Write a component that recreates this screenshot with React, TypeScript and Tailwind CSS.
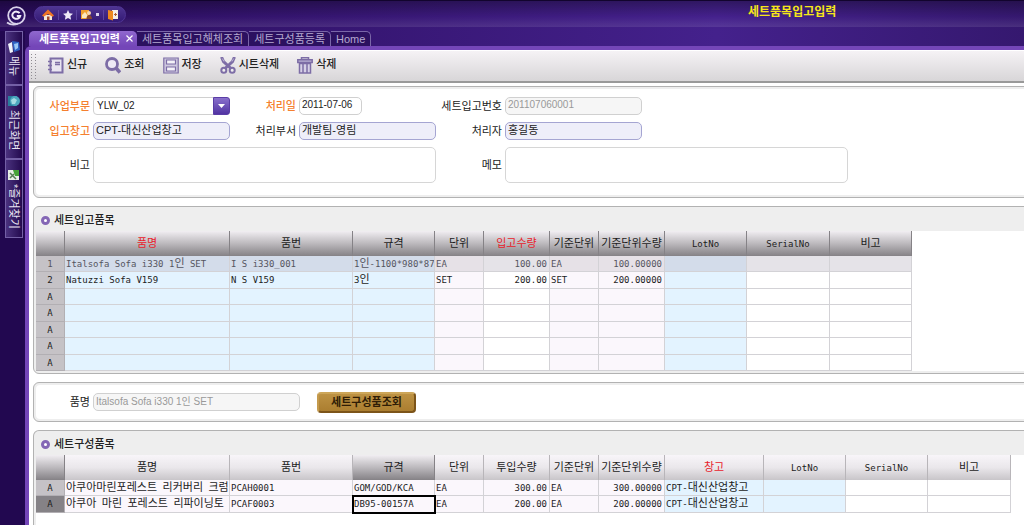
import type { ReactNode } from "react";
import clsx from "clsx";

type Tone = "blue" | "pink" | "white";

interface Column {
  title: string;
  width: string;
  tone: Tone;
  required?: boolean;
  numeric?: boolean;
  active?: boolean;
}

interface Row {
  mark: string;
  cells: string[];
  selected?: boolean;
}

const receiptColumns: Column[] = [
  { title: "품명", width: "w-[165px]", tone: "blue", required: true },
  { title: "품번", width: "w-[123px]", tone: "blue" },
  { title: "규격", width: "w-[82px]", tone: "blue" },
  { title: "단위", width: "w-[49px]", tone: "pink" },
  { title: "입고수량", width: "w-[66px]", tone: "white", required: true, numeric: true },
  { title: "기준단위", width: "w-[49px]", tone: "pink" },
  { title: "기준단위수량", width: "w-[66px]", tone: "pink", numeric: true },
  { title: "LotNo", width: "w-[82px]", tone: "blue" },
  { title: "SerialNo", width: "w-[83px]", tone: "white" },
  { title: "비고", width: "w-[82px]", tone: "white" },
];

const receiptRows: Row[] = [
  {
    mark: "1",
    selected: true,
    cells: ["Italsofa Sofa i330 1인 SET", "I S i330_001", "1인-1100*980*87", "EA", "100.00", "EA", "100.00000", "", "", ""],
  },
  {
    mark: "2",
    cells: ["Natuzzi Sofa V159", "N S V159", "3인", "SET", "200.00", "SET", "200.00000", "", "", ""],
  },
  { mark: "A", cells: [] },
  { mark: "A", cells: [] },
  { mark: "A", cells: [] },
  { mark: "A", cells: [] },
  { mark: "A", cells: [] },
];

const partColumns: Column[] = [
  { title: "품명", width: "w-[165px]", tone: "pink" },
  { title: "품번", width: "w-[123px]", tone: "pink" },
  { title: "규격", width: "w-[82px]", tone: "pink", active: true },
  { title: "단위", width: "w-[49px]", tone: "pink" },
  { title: "투입수량", width: "w-[66px]", tone: "pink", numeric: true },
  { title: "기준단위", width: "w-[49px]", tone: "pink" },
  { title: "기준단위수량", width: "w-[66px]", tone: "pink", numeric: true },
  { title: "창고", width: "w-[99px]", tone: "blue", required: true },
  { title: "LotNo", width: "w-[82px]", tone: "blue" },
  { title: "SerialNo", width: "w-[82px]", tone: "white" },
  { title: "비고", width: "w-[83px]", tone: "white" },
];

const partRows: Row[] = [
  {
    mark: "A",
    cells: ["아쿠아마린포레스트 리커버리 크럼", "PCAH0001", "GOM/GOD/KCA", "EA", "300.00", "EA", "300.00000", "CPT-대신산업창고", "", "", ""],
  },
  {
    mark: "A",
    cells: ["아쿠아 마린 포레스트 리파이닝토", "PCAF0003", "DB95-00157A", "EA", "200.00", "EA", "200.00000", "CPT-대신산업창고", "", "", ""],
  },
];

const toneClass: Record<Tone, string> = {
  blue: "bg-[#e3f3ff]",
  pink: "bg-[#fbf7fc]",
  white: "bg-white",
};

const selectedToneClass: Record<Tone, string> = {
  blue: "bg-[#d3dcea]",
  pink: "bg-[#e6e1e7]",
  white: "bg-[#e5e3e8]",
};

// Latin is set in a small monospace, Hangul one step larger
function GridText({ children }: { children: string }) {
  return (
    <>
      {children.split(/([가-힣]+)/).map((part, i) =>
        /[가-힣]/.test(part) ? (
          <span key={i} className="text-[11px]">{part}</span>
        ) : (
          part
        )
      )}
    </>
  );
}

interface GridProps {
  label: string;
  columns: Column[];
  rows: Row[];
  dark?: boolean;
  focus?: { row: number; col: number };
}

function Grid({ label, columns, rows, dark, focus }: GridProps) {
  const darkHead = "bg-linear-to-b from-[#f1eef2] via-[#bcb9bd] to-[#858286] border-[#858286]";
  const lightHead = "bg-linear-to-b from-[#f8f5f9] via-[#eae7eb] to-[#c8c5c9] border-[#b8b5b9]";

  return (
    <table
      aria-label={label}
      className="w-0 table-fixed border-separate border-spacing-0 whitespace-pre font-['DejaVu_Sans_Mono','Noto_Sans_CJK_KR',monospace] text-[9px] leading-[14px] text-[#1c1c1c]"
    >
      <thead>
        <tr className="h-[25px]">
          <th aria-label="No" className={clsx("w-[29px] border-r p-0", darkHead)} />
          {columns.map((col) => (
            <th
              key={col.title}
              scope="col"
              className={clsx(
                "border-r p-0 font-normal",
                col.width,
                dark || col.active ? darkHead : lightHead,
                col.required && "text-[#e8212b]"
              )}
            >
              <GridText>{col.title}</GridText>
            </th>
          ))}
        </tr>
      </thead>
      <tbody>
        {rows.map((row, r) => (
          <tr key={r} className={clsx("h-[16px] even:h-[17px]", row.selected && "text-[#55555f]")}>
            <th
              scope="row"
              className={clsx(
                "border-r border-b border-[#b2afb3] p-0 font-normal",
                focus?.row === r ? "bg-[#858286]" : "bg-[#c5c2c6]"
              )}
            >
              {row.mark}
            </th>
            {columns.map((col, c) => (
              <td
                key={col.title}
                className={clsx(
                  "overflow-hidden border-r border-b border-[#d3d2d6] py-0",
                  row.selected ? selectedToneClass[col.tone] : toneClass[col.tone],
                  col.numeric ? "pr-[2px] pl-0 text-right" : "pr-0 pl-px",
                  focus?.row === r && focus.col === c && "outline-2 -outline-offset-1 outline-black"
                )}
              >
                <GridText>{row.cells[c] ?? ""}</GridText>
              </td>
            ))}
          </tr>
        ))}
      </tbody>
    </table>
  );
}

function Panel({ className, children }: { className?: string; children: ReactNode }) {
  return (
    <section className={clsx("-mr-2 rounded-md border border-[#b2b2b2] bg-[#eeeeee] p-[2px]", className)}>
      {children}
    </section>
  );
}

function PanelTitle({ children }: { children: ReactNode }) {
  return (
    <h2 className="flex h-[22px] items-center gap-1 pl-[5px] text-[11px] leading-4 font-medium text-[#222]">
      <span className="size-[9px] rounded-full border-[3px] border-[#8467b5] bg-white" />
      {children}
    </h2>
  );
}

function Label({ htmlFor, required, children }: { htmlFor: string; required?: boolean; children: ReactNode }) {
  return (
    <label
      htmlFor={htmlFor}
      className={clsx("self-center pr-[3px] text-right leading-4", required ? "font-medium text-[#f5802f]" : "text-[#222]")}
    >
      {children}
    </label>
  );
}

const fieldBase = "block h-[18px] w-full rounded-[5px] border px-[2px] pb-[4px] leading-3 outline-none";
const plainField = "border-[#d0d0d0] bg-white text-[10px] text-[#222]";
const lockedField = "border-[#d0d0d0] bg-[#f6f6f6] text-[10px] text-[#999]";
const codeField = "border-[#a5a5d2] bg-[#eeeef9] text-[11px] text-[#222]";

const iconProps = {
  width: 16,
  height: 17,
  viewBox: "0 0 16 17",
  fill: "none",
  stroke: "#7d6da6",
  strokeWidth: 2,
  "aria-hidden": true,
} as const;

const tools = [
  {
    name: "신규",
    icon: (
      <svg {...iconProps}>
        <path d="M2.5 1.5h12v14h-12z" fill="#e9e5f1" />
        <path d="M0 4.5h4M0 8.5h4M0 12.5h4" strokeWidth="1.5" />
        <path d="M7 5.5h5M7 7.5h5" strokeWidth="1.5" />
      </svg>
    ),
  },
  {
    name: "조회",
    icon: (
      <svg {...iconProps}>
        <circle cx="7" cy="7" r="5.5" fill="#eeeaf5" strokeWidth="2.8" />
        <path d="M11 11l4 4.5" strokeWidth="3.6" />
      </svg>
    ),
  },
  {
    name: "저장",
    icon: (
      <svg {...iconProps} strokeWidth="1.2">
        <path d="M.8 1h14.400v15H.8z" fill="#cfc9df" />
        <path d="M3.500 3h9v4h-9z" fill="#f4f2f8" />
        <path d="M3.500 10h9v4h-9z" fill="#f4f2f8" />
      </svg>
    ),
  },
  {
    name: "시트삭제",
    icon: (
      <svg {...iconProps}>
        <path d="M1.500 0L3.500 4.500 11 11.500M14.500 0L12.500 4.500 5 11.500" strokeWidth="3" />
        <circle cx="3.800" cy="13.200" r="2.500" fill="#eee" />
        <circle cx="12.200" cy="13.200" r="2.500" fill="#eee" />
        <path d="M2.300 1.500L4 4.500M13.700 1.500L12 4.500" stroke="#b9b0d3" strokeWidth="1" />
      </svg>
    ),
  },
  {
    name: "삭제",
    icon: (
      <svg {...iconProps} strokeWidth="1.5">
        <path d="M4.500 2.500V.8h7v1.700" />
        <path d="M.8 2.800h14.400v2.600H.8z" fill="#b9b0d3" />
        <path d="M2.500 6.500h11V16h-11z" fill="#d6d0e6" />
        <path d="M6 6.500V16M10 6.500V16" />
      </svg>
    ),
  },
];

const sideTabs = [
  {
    name: "메뉴",
    height: "h-[54px]",
    icon: (
      <svg width="12" height="12" viewBox="0 0 12 12" aria-hidden="true">
        <path d="M0 3l4-2 1 10-3 1z" fill="#f2f5fb" />
        <path d="M4 0l7 1 1 8-6 2z" fill="#2f63c4" />
        <path d="M6 3l4-1v5l-3 2z" fill="#9cc8f5" />
      </svg>
    ),
  },
  {
    name: "최근화면",
    height: "h-[74px]",
    icon: (
      <svg width="12" height="12" viewBox="0 0 12 12" aria-hidden="true">
        <path d="M0 1h9v10H0z" fill="#2a7d9c" />
        <circle cx="7" cy="6" r="5" fill="#4da8bf" />
        <path d="M3 5l3-2 3 2-2 4H4z" fill="#a5dbe3" />
      </svg>
    ),
  },
  {
    name: "*즐겨찾기",
    height: "h-[79px]",
    icon: (
      <svg width="12" height="12" viewBox="0 0 12 12" aria-hidden="true">
        <path d="M0 1h11v10H0z" fill="#e8efe6" />
        <path d="M5 1h6v6H7z" fill="#45a336" />
        <path d="M2 4l6 6M2 9l4-4" stroke="#567c55" strokeWidth="1.5" />
      </svg>
    ),
  },
];

const tabs = ["세트품목입고해체조회", "세트구성품등록", "Home"];

function TopBar() {
  return (
    <header className="flex h-[26px] bg-linear-to-b from-black/30 via-transparent via-60% to-white/10">
      <div className="flex w-[34px] items-center pt-1 pl-[6px]">
        <svg width="20" height="20" viewBox="0 0 20 20" fill="none" aria-label="G" role="img">
          <circle cx="10.500" cy="9.500" r="8.300" fill="#2c1064" stroke="#d9d2ea" strokeWidth="1.800" />
          <path d="M1 16.500q5 3.500 11 1.200" stroke="#d9d2ea" strokeWidth="1.800" />
          <path d="M13.600 7.200A4 3.600 0 1 0 14.200 10H10.800" stroke="#f0ecf8" strokeWidth="2" />
        </svg>
      </div>
      <nav className="mt-[5px] flex h-[17px] w-[92px] items-center justify-between rounded-full border border-[#4f3594] bg-linear-to-b from-[#4e3491] to-[#341975] px-[7px]">
        <button type="button" aria-label="홈">
          <svg width="12" height="12" viewBox="0 0 12 12" aria-hidden="true">
            <path d="M2 6h8v5H2z" fill="#f5e8d8" />
            <path d="M0 6.500L6 .5l6 6-1.500 1.200L6 5 1.500 7.700z" fill="#ee7424" />
            <path d="M5 7.500h2.500V11H5z" fill="#a4492b" />
          </svg>
        </button>
        <span className="h-[10px] w-px bg-[#5d45a0]" />
        <button type="button" aria-label="즐겨찾기">
          <svg width="10" height="10" viewBox="0 0 10 10" aria-hidden="true">
            <path d="M5 0l1.500 3.300 3.500.4-2.600 2.400.7 3.700L5 8 1.900 9.800l.7-3.700L0 3.700l3.500-.4z" fill="#efeaf8" />
          </svg>
        </button>
        <span className="h-[10px] w-px bg-[#5d45a0]" />
        <button type="button" aria-label="사용자" className="flex items-center gap-1">
          <svg width="11" height="11" viewBox="0 0 11 11" aria-hidden="true">
            <path d="M0 1h8v9H0z" fill="#f2a12e" />
            <path d="M1 6l3-3 3 4v2H1z" fill="#fbe9bf" />
            <circle cx="8" cy="4" r="2" fill="#f7d7b2" />
            <path d="M5.500 10q0-4 2.500-4t3 4z" fill="#8c4a2c" />
          </svg>
          <span className="size-[3px] bg-[#d9d2ea]" />
        </button>
        <span className="h-[10px] w-px bg-[#5d45a0]" />
        <button type="button" aria-label="종료">
          <svg width="10" height="12" viewBox="0 0 10 12" aria-hidden="true">
            <path d="M4 1h6v9H4z" fill="#f6efe6" />
            <path d="M0 1l5 1v9.500L0 10z" fill="#ef8a1f" />
            <path d="M6 5.500h3M7.500 4v3" stroke="#b06030" />
          </svg>
        </button>
      </nav>
      <h1 className="ml-[622px] pt-[3px] text-[12px] leading-4 font-bold whitespace-nowrap text-[#f6e619]">세트품목입고입력</h1>
    </header>
  );
}

export default function App() {
  return (
    <div className="flex min-h-screen flex-col overflow-hidden border-t border-[#12042e] bg-linear-to-r from-[#2a0c5c] via-[#44218c] via-70% to-[#35186f] font-['Liberation_Sans','Noto_Sans_CJK_KR',sans-serif] text-[11px]">
      <TopBar />

      <div className="flex grow pt-1">
        <aside className="w-[25px] shrink-0 bg-[#220850] pl-[5px]">
          {sideTabs.map((tab) => (
            <button
              key={tab.name}
              type="button"
              className={clsx(
                "flex w-[18px] flex-col items-center gap-[3px] border border-[#7460a6] bg-linear-to-r from-[#4b327f] to-[#24094f] pt-[9px] text-[#e9e4f4]",
                tab.height
              )}
            >
              {tab.icon}
              <span className="leading-4 [text-orientation:sideways] [writing-mode:vertical-rl]">{tab.name}</span>
            </button>
          ))}
        </aside>

        <div className="flex min-w-0 grow flex-col">
          <div role="tablist" className="flex h-[15px] items-stretch pl-1 whitespace-nowrap">
            <div className="flex w-[108px] items-center gap-[6px] rounded-t-[5px] bg-linear-to-b from-[#9068cf] to-[#7446b8] pl-[10px] font-bold text-white">
              <button type="button" role="tab" aria-selected="true" className="leading-[14px]">세트품목입고입력</button>
              <button type="button" aria-label="닫기">
                <svg width="7" height="7" viewBox="0 0 7 7" stroke="#fff" strokeWidth="1.200" aria-hidden="true">
                  <path d="M.5.500l6 6M6.500.500l-6 6" />
                </svg>
              </button>
            </div>
            {tabs.map((tab) => (
              <button
                key={tab}
                type="button"
                role="tab"
                aria-selected="false"
                className="rounded-tr-[5px] border-t border-r border-[#7a66a8] bg-[#2c1160] px-[5px] leading-[14px] text-[#b5a9d0]"
              >
                {tab}
              </button>
            ))}
          </div>

          <main className="flex grow flex-col rounded-tl-md border-t-4 border-l-4 border-[#7446b8] bg-white">
            <div role="toolbar" className="flex h-[33px] items-start border-t border-b-2 border-t-white border-b-[#999] bg-linear-to-b from-[#f5f2f5] to-[#d8d6d8] pt-[3px] pl-[2px]">
              <svg width="6" height="27" viewBox="0 0 6 27" fill="#8f8c92" className="mr-[11px]" aria-hidden="true">
                {[0, 3, 6, 9, 12, 15, 18, 21, 24].map((y) => (
                  <g key={y}>
                    <rect x="0" y={y} width="1" height="1" />
                    <rect x="4" y={y} width="1" height="1" />
                  </g>
                ))}
              </svg>
              <div className="flex gap-[18px] pt-[3px]">
                {tools.map((tool) => (
                  <button key={tool.name} type="button" className="flex items-start gap-[3px] font-medium text-[#222]">
                    {tool.icon}
                    <span className="leading-[14px]">{tool.name}</span>
                  </button>
                ))}
              </div>
            </div>

            <div className="flex grow flex-col gap-2 overflow-hidden pt-[3px] pl-1">
              <Panel>
                <form
                  onSubmit={(e) => e.preventDefault()}
                  className="grid grid-cols-[57px_137px_69px_137px_69px_343px] gap-y-[7px] rounded-sm bg-white pt-2 pb-3"
                >
                  <Label htmlFor="unit" required>사업부문</Label>
                  <div className="relative">
                    <select
                      id="unit"
                      className="block h-[18px] w-full appearance-none rounded-sm border border-[#d0d0d0] bg-white pl-[3px] text-[10px] leading-4 text-[#222] outline-none"
                    >
                      <option>YLW_02</option>
                    </select>
                    <span className="pointer-events-none absolute top-0 right-0 flex h-[18px] w-[17px] items-center justify-center rounded-r-[3px] border border-[#5a3da6] bg-linear-to-b from-[#8a70cc] to-[#5233a2]">
                      <svg width="7" height="4" viewBox="0 0 7 4" aria-hidden="true">
                        <path d="M0 0h7L3.500 4z" fill="#fff" />
                      </svg>
                    </span>
                  </div>
                  <Label htmlFor="date" required>처리일</Label>
                  <div className="w-[63px]">
                    <input id="date" defaultValue="2011-07-06" className={clsx(fieldBase, plainField)} />
                  </div>
                  <Label htmlFor="receiptNo">세트입고번호</Label>
                  <div className="w-[137px]">
                    <input id="receiptNo" readOnly defaultValue="201107060001" className={clsx(fieldBase, lockedField)} />
                  </div>

                  <Label htmlFor="warehouse" required>입고창고</Label>
                  <input id="warehouse" defaultValue="CPT-대신산업창고" className={clsx(fieldBase, codeField)} />
                  <Label htmlFor="dept">처리부서</Label>
                  <input id="dept" defaultValue="개발팀-영림" className={clsx(fieldBase, codeField)} />
                  <Label htmlFor="person">처리자</Label>
                  <div className="w-[137px]">
                    <input id="person" defaultValue="홍길동" className={clsx(fieldBase, codeField)} />
                  </div>

                  <Label htmlFor="remark">비고</Label>
                  <textarea id="remark" className="col-span-3 h-9 resize-none rounded-[5px] border border-[#d6d6d6] bg-white p-1" />
                  <Label htmlFor="memo">메모</Label>
                  <textarea id="memo" className="h-9 resize-none rounded-[5px] border border-[#d6d6d6] bg-white p-1" />
                </form>
              </Panel>

              <Panel>
                <PanelTitle>세트입고품목</PanelTitle>
                <div className="bg-white">
                  <Grid label="세트입고품목" columns={receiptColumns} rows={receiptRows} dark />
                </div>
              </Panel>

              <Panel>
                <form onSubmit={(e) => e.preventDefault()} className="flex h-[34px] items-center rounded-sm bg-white">
                  <div className="grid grid-cols-[57px_207px]">
                    <Label htmlFor="item">품명</Label>
                    <input id="item" readOnly defaultValue="Italsofa Sofa i330 1인 SET" className={clsx(fieldBase, lockedField)} />
                  </div>
                  <button
                    type="button"
                    className="ml-[17px] h-[21px] w-[99px] rounded-[4px] border-2 border-t-[#cda659] border-r-[#7c5419] border-b-[#7c5419] border-l-[#c49a4c] bg-linear-to-b from-[#bd9243] to-[#ab7e30] leading-4 font-bold text-[#2f1d06]"
                  >
                    세트구성품조회
                  </button>
                </form>
              </Panel>

              <Panel className="grow rounded-b-none border-b-0 pb-0">
                <div className="flex h-full flex-col">
                  <PanelTitle>세트구성품목</PanelTitle>
                  <div className="grow bg-white">
                    <Grid label="세트구성품목" columns={partColumns} rows={partRows} focus={{ row: 1, col: 2 }} />
                  </div>
                </div>
              </Panel>
            </div>
          </main>
        </div>
      </div>
    </div>
  );
}
